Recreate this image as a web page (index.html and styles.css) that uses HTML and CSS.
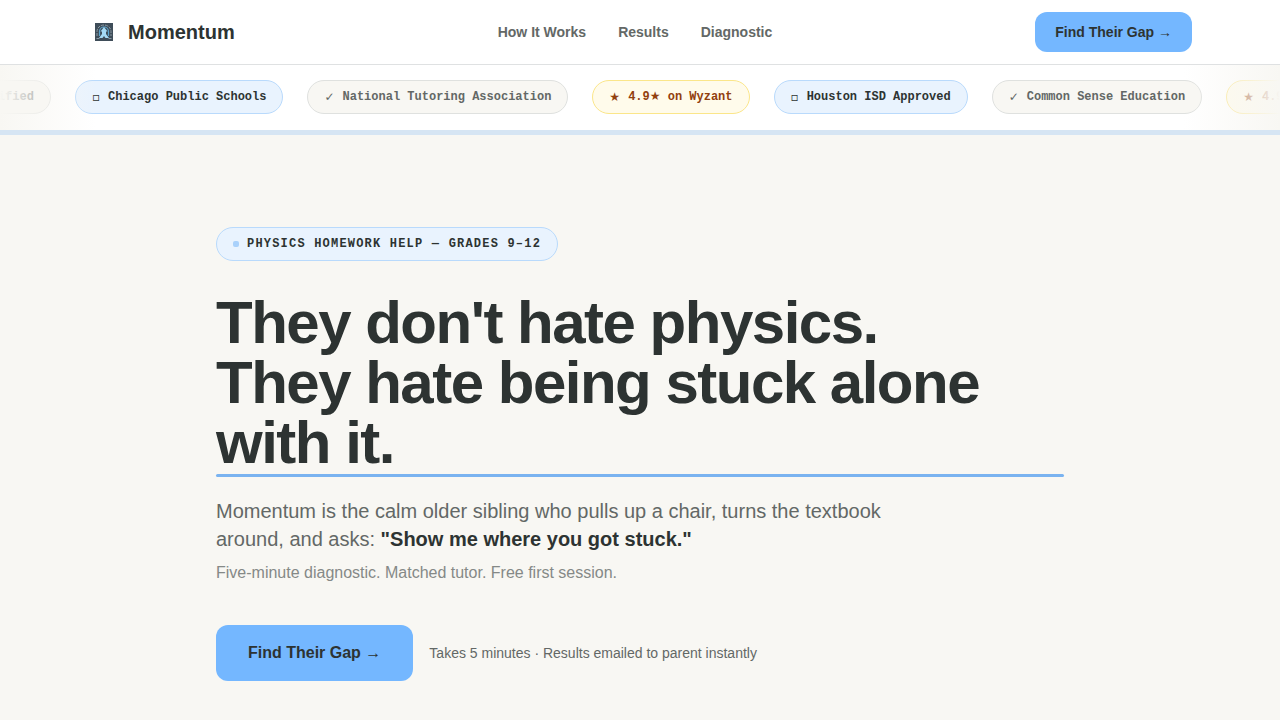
FILE: index.html
```html
<!DOCTYPE html>
<html lang="en">
<head>
  <meta charset="utf-8">
  <meta name="viewport" content="width=device-width, initial-scale=1">
  <title>Momentum</title>
  <link rel="stylesheet" href="styles.css">
</head>
<body>
  <header class="site-header">
    <div class="nav-inner">
      <a class="brand" href="#">
        <span class="brand-icon">
          <svg viewBox="0 0 18 18" width="18" height="18" aria-hidden="true">
            <rect width="18" height="18" fill="#3f4d59"/>
            <path d="M2 13V8.500a7 6.500 0 0 1 14 0V13" fill="none" stroke="#8b9ba6" stroke-width="1" stroke-dasharray="3 1"/>
            <path d="M4.500 13V8.500a4.500 4.500 0 0 1 9 0V13" fill="none" stroke="#5ba3cc" stroke-width="1.200"/>
            <path d="M9 4l3.500 4.500h-1.500v2.500l3 4h-3.500L9 13l-1.500 2H4l3-4V8.500H5.500z" fill="#a5daf5"/>
            <path d="M1.500 15.500h3M13.500 15.500h3" stroke="#8b9ba6" stroke-width="1"/>
          </svg>
        </span>
        <span>Momentum</span>
      </a>
      <nav class="nav-links">
        <a href="#how">How It Works</a>
        <a href="#results">Results</a>
        <a href="#diagnostic">Diagnostic</a>
      </nav>
      <button class="btn btn-small" type="button">Find Their Gap →</button>
    </div>
  </header>

  <section class="trust-bar">
    <div class="trust-track">
      <span class="pill"><span class="pill-icon">✓</span><span>Certified</span></span>
      <span class="pill pill-blue"><span class="pill-icon">▫</span><span>Chicago Public Schools</span></span>
      <span class="pill"><span class="pill-icon">✓</span><span>National Tutoring Association</span></span>
      <span class="pill pill-yellow"><span class="pill-icon">★</span><span>4.9★ on Wyzant</span></span>
      <span class="pill pill-blue"><span class="pill-icon">▫</span><span>Houston ISD Approved</span></span>
      <span class="pill"><span class="pill-icon">✓</span><span>Common Sense Education</span></span>
      <span class="pill pill-yellow"><span class="pill-icon">★</span><span>4.9★ on Wyzant</span></span>
    </div>
  </section>

  <main class="hero">
    <div class="badge"><span class="badge-dot"></span>PHYSICS HOMEWORK HELP — GRADES 9–12</div>
    <h1>They don't hate physics.<br>They hate being stuck alone with it.</h1>
    <div class="rule"></div>
    <p class="lead">Momentum is the calm older sibling who pulls up a chair, turns the textbook around, and asks: <strong>"Show me where you got stuck."</strong></p>
    <p class="sub">Five-minute diagnostic. Matched tutor. Free first session.</p>
    <div class="actions">
      <button class="btn btn-large" type="button">Find Their Gap →</button>
      <span class="note">Takes 5 minutes · Results emailed to parent instantly</span>
    </div>
  </main>
</body>
</html>
```
FILE: styles.css
```css
* {
  box-sizing: border-box;
}
body {
  margin: 0;
  background: #f8f7f3;
  color: #2d3332;
  font-family: "Liberation Sans", Arial, sans-serif;
  overflow-x: hidden;
}
a {
  color: inherit;
  text-decoration: none;
}

/* header */
.site-header {
  background: #fff;
  border-bottom: 1px solid #dfe1e2;
}
.nav-inner {
  display: flex;
  align-items: center;
  justify-content: space-between;
  max-width: 1152px;
  height: 64px;
  margin: 0 auto;
  padding: 0 24px;
}
.brand {
  display: flex;
  align-items: center;
  gap: 8px;
  font-size: 20px;
  font-weight: bold;
}
.brand-icon {
  display: flex;
  justify-content: center;
  width: 32px;
}
.nav-links {
  display: flex;
  gap: 32px;
  color: #636866;
  font-size: 14px;
  font-weight: bold;
}
.btn {
  border: 0;
  border-radius: 12px;
  background: #74b7ff;
  color: #2d3332;
  font-family: inherit;
  font-weight: bold;
  cursor: pointer;
}
.btn-small {
  height: 40px;
  padding: 0 20px;
  font-size: 14px;
}
.btn-large {
  height: 56px;
  padding: 0 32px;
  font-size: 16px;
}

.trust-bar {
  position: relative;
  overflow: hidden;
  padding: 15px 0 16px;
  background: #fff;
  border-bottom: 5px solid #d6e5f3;
}
.trust-bar::before,
.trust-bar::after {
  content: "";
  position: absolute;
  z-index: 1;
  top: 0;
  bottom: 0;
  width: 96px;
}
.trust-bar::before {
  left: 0;
  background: linear-gradient(to right, #f8f7f3, rgba(248, 247, 243, 0));
}
.trust-bar::after {
  right: 0;
  background: linear-gradient(to left, #f8f7f3, rgba(248, 247, 243, 0));
}
.trust-track {
  display: flex;
  gap: 24px;
  width: max-content;
  margin-left: -66px;
}
.pill {
  display: flex;
  align-items: center;
  gap: 8px;
  height: 34px;
  padding: 0 16px;
  border: 1px solid #dfe1df;
  border-radius: 17px;
  background: #f8f7f3;
  color: #636866;
  font: bold 12px/16px "Liberation Mono", "DejaVu Sans", monospace;
  white-space: nowrap;
}
.pill-icon {
  font-family: "DejaVu Sans", sans-serif;
}
.pill-blue {
  border-color: #b9dafc;
  background: #e9f3fe;
  color: #2d3332;
}
.pill-yellow {
  border-color: #fbe68a;
  background: #fffbeb;
  color: #92400e;
}

/* hero */
.hero {
  max-width: 896px;
  margin: 0 auto;
  padding: 92px 24px 39px;
}
.badge {
  display: inline-flex;
  align-items: center;
  gap: 8px;
  padding: 8px 16px;
  border: 1px solid #b9dafc;
  border-radius: 17px;
  background: #e9f3fe;
  font: bold 12px/16px "Liberation Mono", monospace;
  letter-spacing: 0.1em;
}
.badge-dot {
  width: 6px;
  height: 6px;
  border-radius: 2px;
  background: #a9d1fb;
}
h1 {
  margin: 32px 0 0;
  font-size: 60px;
  line-height: 60px;
  letter-spacing: -0.025em;
}
.rule {
  height: 3px;
  margin-top: 1px;
  border-radius: 2px;
  background: #7ab3f0;
}
.lead {
  max-width: 672px;
  margin: 20px 0 0;
  color: #636866;
  font-size: 20px;
  line-height: 28px;
}
.lead strong {
  color: #2d3332;
}
.sub {
  margin: 8px 0 0;
  color: #858987;
  font-size: 16px;
  line-height: 24px;
}
.actions {
  display: flex;
  align-items: center;
  gap: 16px;
  margin-top: 40px;
}
.note {
  color: #636866;
  font-size: 14px;
}
```
